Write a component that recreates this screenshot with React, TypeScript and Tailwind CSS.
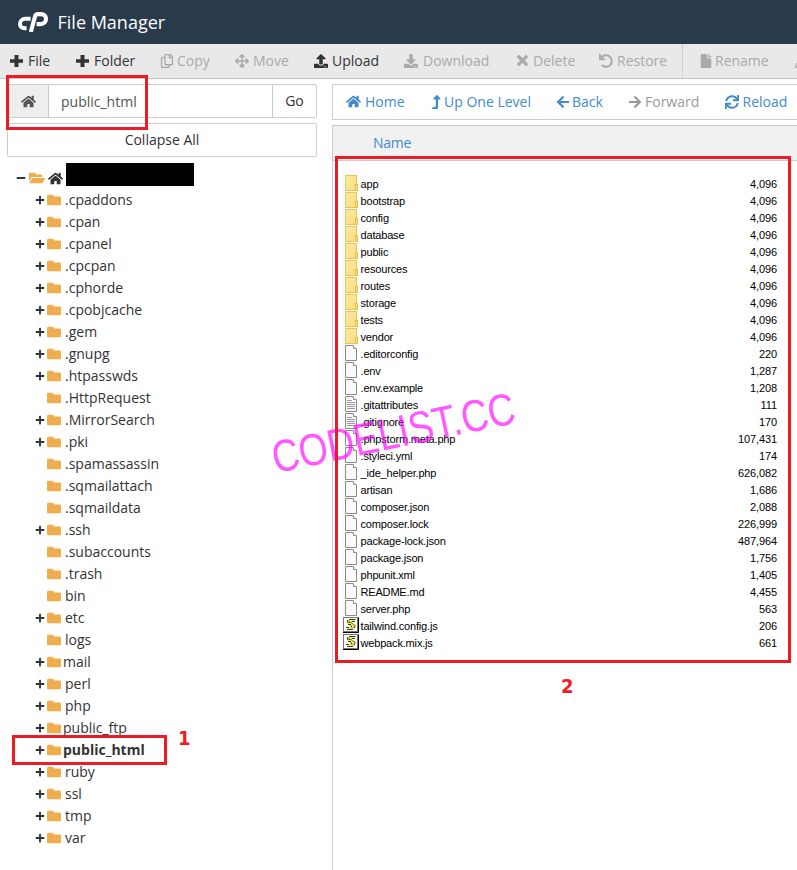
import type { ReactNode } from 'react';
import {
  FaPlus, FaMinus, FaRegCopy, FaArrowsAlt, FaUpload, FaDownload, FaTimes, FaUndo, FaFile, FaPencilAlt,
  FaHome, FaLevelUpAlt, FaArrowLeft, FaArrowRight, FaSync, FaFolder, FaFolderOpen,
} from 'react-icons/fa';

type Action = { label: string; icon: ReactNode; cls: string };

/* Heavy plus used by the creation actions */
const BoldPlus = () => (
  <svg width="15" height="14" viewBox="0 0 15 14" fill="#333">
    <path d="M5.5 1H9.5V5.2H14V8.8H9.5V13H5.5V8.8H1V5.2H5.5Z" />
  </svg>
);

const tools: Action[] = [
  { label: 'File', icon: <BoldPlus />, cls: 'w-[66px] gap-[4px] text-[#333]' },
  { label: 'Folder', icon: <BoldPlus />, cls: 'w-[85px] gap-[4px] text-[#333]' },
  { label: 'Copy', icon: <FaRegCopy size={14} />, cls: 'w-[75px] gap-[3px] text-[#aaa]' },
  { label: 'Move', icon: <FaArrowsAlt size={14} />, cls: 'w-[79px] gap-[4px] text-[#aaa]' },
  { label: 'Upload', icon: <FaUpload size={14} />, cls: 'w-[90px] gap-[4px] text-[#333]' },
  { label: 'Download', icon: <FaDownload size={14} />, cls: 'w-[111px] gap-[5px] text-[#aaa]' },
  {
    label: 'Delete',
    icon: <FaTimes size={15} stroke="#aaa" strokeWidth={26} />,
    cls: 'w-[84px] gap-[3px] text-[#aaa]',
  },
  { label: 'Restore', icon: <FaUndo size={14} />, cls: 'w-[84px] gap-[4px] text-[#aaa] border-r border-dotted border-[#bbb]' },
  { label: 'Rename', icon: <FaFile size={14} />, cls: 'ml-[16px] w-[96px] gap-[2px] text-[#aaa]' },
  { label: 'Edit', icon: <FaPencilAlt size={14} />, cls: 'w-[80px] gap-[3px] text-[#aaa]' },
];

const nav: Action[] = [
  { label: 'Home', icon: <FaHome size={15} />, cls: 'w-[83px] gap-[4px] text-[#428bca]' },
  { label: 'Up One Level', icon: <FaLevelUpAlt size={14} />, cls: 'w-[127px] gap-[1px] text-[#428bca]' },
  { label: 'Back', icon: <FaArrowLeft size={14} />, cls: 'w-[72px] gap-[2px] text-[#428bca]' },
  { label: 'Forward', icon: <FaArrowRight size={14} />, cls: 'w-[96.5px] gap-[3px] text-[#999]' },
  { label: 'Reload', icon: <FaSync size={14} />, cls: 'gap-[4px] text-[#428bca]' },
];

type Node = { name: string; leaf?: boolean };
const tree: Node[] = [
  { name: '.cpaddons' }, { name: '.cpan' }, { name: '.cpanel' }, { name: '.cpcpan' }, { name: '.cphorde' },
  { name: '.cpobjcache' }, { name: '.gem' }, { name: '.gnupg' }, { name: '.htpasswds' },
  { name: '.HttpRequest', leaf: true }, { name: '.MirrorSearch' }, { name: '.pki' },
  { name: '.spamassassin', leaf: true }, { name: '.sqmailattach', leaf: true }, { name: '.sqmaildata', leaf: true },
  { name: '.ssh' }, { name: '.subaccounts', leaf: true }, { name: '.trash', leaf: true }, { name: 'bin', leaf: true },
  { name: 'etc' }, { name: 'logs', leaf: true }, { name: 'mail' }, { name: 'perl' }, { name: 'php' },
  { name: 'public_ftp' }, { name: 'public_html' }, { name: 'ruby' }, { name: 'ssl' }, { name: 'tmp' }, { name: 'var' },
];
const special = ['mail', 'public_ftp', 'public_html'];

type Kind = 'dir' | 'file' | 'text' | 'script';
const files: [string, string, Kind][] = [
  ['app', '4,096', 'dir'], ['bootstrap', '4,096', 'dir'], ['config', '4,096', 'dir'], ['database', '4,096', 'dir'],
  ['public', '4,096', 'dir'], ['resources', '4,096', 'dir'], ['routes', '4,096', 'dir'], ['storage', '4,096', 'dir'],
  ['tests', '4,096', 'dir'], ['vendor', '4,096', 'dir'], ['.editorconfig', '220', 'file'], ['.env', '1,287', 'file'],
  ['.env.example', '1,208', 'file'], ['.gitattributes', '111', 'text'], ['.gitignore', '170', 'text'],
  ['.phpstorm.meta.php', '107,431', 'file'], ['.styleci.yml', '174', 'file'], ['_ide_helper.php', '626,082', 'file'],
  ['artisan', '1,686', 'file'], ['composer.json', '2,088', 'file'], ['composer.lock', '226,999', 'file'],
  ['package-lock.json', '487,964', 'file'], ['package.json', '1,756', 'file'], ['phpunit.xml', '1,405', 'file'],
  ['README.md', '4,455', 'file'], ['server.php', '563', 'file'], ['tailwind.config.js', '206', 'script'],
  ['webpack.mix.js', '661', 'script'],
];

function FileIcon({ kind }: { kind: Kind }) {
  if (kind === 'dir')
    return (
      <svg width="16" height="17" viewBox="0 0 16 17">
        <defs>
          <linearGradient id="dir" x1="0" y1="0" x2="1" y2="1">
            <stop offset="0" stopColor="#ffeba6" />
            <stop offset="1" stopColor="#fbdc7c" />
          </linearGradient>
        </defs>
        <rect x="2.5" y="0.5" width="11" height="15" fill="url(#dir)" stroke="#e9c653" />
        <rect x="12.5" y="9.5" width="2" height="6" fill="#fbe08a" stroke="#e3bf4c" />
      </svg>
    );
  if (kind === 'script')
    return (
      <svg width="16" height="17" viewBox="0 0 16 17">
        <rect x="0.5" y="0.5" width="14" height="14" fill="#fff" stroke="#777" />
        <path d="M0 15.5H15.5V0.5" fill="none" stroke="#000" />
        <path d="M6 3H12L9 5L12 9L10 12H4L7 9.5L4 6Z" fill="#f0ea50" />
        <path
          d="M6 2.5H12.5M12 4.5H9M5.5 3.5H4.5V5.5H5.5M7 4.5L9 6.5M5 7.5H8M10 6.5L12 8.5L11 11.5M8 8.5L9 10.5M3 10.5H6M4 12.5H10M6 5.5H7"
          fill="none"
          stroke="#222"
          strokeWidth="0.9"
        />
      </svg>
    );
  return (
    <svg width="16" height="17" viewBox="0 0 16 17">
      <path d="M2.5 0.5H10L13.5 4V15.5H2.5Z" fill="#fafbfb" stroke="#8b8b8b" />
      <path d="M10.5 0.5V3.5H13.5" fill="#fff" stroke="#8b8b8b" />
      {kind === 'text' && <path d="M4 4.5H9M4 6.5H12M4 8.5H12M4 10.5H12M4 12.5H12" stroke="#9a9a9a" />}
    </svg>
  );
}

/* Linked "c" and "P" shapes of the brand mark */
function CpanelMark() {
  return (
    <svg width="30" height="20" viewBox="0 0 30 20" fill="none" stroke="#fff">
      <path d="M12.6 6.8H7.2C4.2 6.8 2 9.2 2 11.9C2 14.6 4 16.2 6.4 16.2H8.6" strokeWidth="4" />
      <path d="M12.8 20L17 4.6Q17.6 2.1 20.2 2.1H23C26 2.1 28 4.4 28 6.8C28 9.9 25.7 12.1 22.8 12.1H18.6" strokeWidth="4.1" />
    </svg>
  );
}

export default function App() {
  return (
    <div className="relative flex h-[870px] w-[797px] flex-col overflow-hidden bg-white font-['Open_Sans',sans-serif] text-[14px] text-[#333]">
      <header className="flex h-[44px] shrink-0 items-center bg-[#293a4a] pl-[18px] text-white">
        <CpanelMark />
        <h1 className="ml-[9.5px] text-[18px] leading-[44px]">File Manager</h1>
      </header>
      <div className="flex h-[35px] shrink-0 items-stretch border-b border-[#c0c4c9] bg-[#e9e9e9] pl-[9px]">
        {tools.map((t) => (
          <button key={t.label} className={'flex shrink-0 items-center whitespace-nowrap pb-px ' + t.cls}>
            {t.icon}
            <span>{t.label}</span>
          </button>
        ))}
      </div>

      <div className="flex min-h-0 flex-1 pt-[5px]">
        <aside className="w-[332px] shrink-0 pl-[7px]">
          <div className="flex h-[34px] w-[310px] rounded-[2px] border border-[#ccc]">
            <div className="flex w-[41px] items-center justify-center border-r border-[#ccc] bg-[#eee] text-[#555]">
              <FaHome size={15} />
            </div>
            <div className="flex flex-1 items-center pl-[12px] pt-px text-[#555]">public_html</div>
            <button className="w-[44px] border-l border-[#ccc] pb-px">Go</button>
          </div>
          <button className="mt-[5px] block h-[34px] w-[310px] rounded-[2px] border border-[#ccc] pb-px">Collapse All</button>
          <div className="mt-[9px] flex h-[22px] items-center pl-[9px]">
            <FaMinus size={10} className="mt-[2px]" />
            <FaFolderOpen size={16} className="ml-[3px] mt-[2px] text-[#f0ad4e]" />
            <FaHome size={15} className="ml-[3px] mt-[2px]" />
            <div className="mb-[6px] ml-[3px] h-[23px] w-[128px] bg-black" />
          </div>
          <ul>
            {tree.map((n) => (
              <li key={n.name} className="flex h-[22px] items-center pl-[27.5px]">
                <span className="w-[12.5px] pt-[2px]">{!n.leaf && <FaPlus size={10} />}</span>
                <FaFolder size={14} className="mt-[2px] text-[#f0ad4e]" />
                <span
                  className={
                    (special.includes(n.name) ? 'ml-[2px]' : 'ml-[4px]') + (n.name === 'public_html' ? ' font-bold' : '')
                  }
                >
                  {n.name}
                </span>
              </li>
            ))}
          </ul>
        </aside>

        <main className="flex flex-1 flex-col">
          <nav className="flex h-[36px] shrink-0 items-center overflow-hidden border border-r-0 border-[#ccc] pb-[2px] pl-[13px]">
            {nav.map((t) => (
              <button key={t.label} className={'flex shrink-0 items-center whitespace-nowrap ' + t.cls}>
                <span className="pt-px">{t.icon}</span>
                <span>{t.label}</span>
              </button>
            ))}
          </nav>
          <section className="mt-[5px] flex-1 border-l border-t border-[#ccc]">
            <div className="flex h-[35px] items-center border-b border-[#ccc] bg-[#f1f1f1] pb-[2px] pl-[40px] tracking-[-0.3px] text-[#428bca]">
              Name
            </div>
            <ul className="pt-[14px] font-['Liberation_Sans',Arial,sans-serif] text-[11px] text-black">
              {files.map(([name, size, kind]) => (
                <li key={name} className="flex h-[17px] items-center pl-[10px] pr-[20px]">
                  <FileIcon kind={kind} />
                  <span className="ml-[1.5px] pt-px tracking-[-0.17px]">{name}</span>
                  <span className="ml-auto pt-px tracking-[-0.1px]">{size}</span>
                </li>
              ))}
            </ul>
          </section>
        </main>
      </div>

      <div className="absolute left-[277px] top-[435px] origin-bottom-left -rotate-[11.8deg] scale-x-[0.83] whitespace-nowrap font-['Liberation_Sans',Arial,sans-serif] text-[45px] leading-[45px] text-[#ff00ff] opacity-65">
        CODELIST.CC
      </div>
      <div className="absolute left-[6px] top-[75px] h-[55px] w-[142px] border-[3px] border-[#ed1c24]" />
      <div className="absolute left-[335px] top-[156px] h-[507px] w-[456px] border-[3px] border-[#ed1c24]" />
      <div className="absolute left-[12px] top-[735px] h-[30px] w-[155px] border-[3px] border-[#ed1c24]" />
      <span className="absolute left-[178px] top-[724px] font-['DejaVu_Sans_Condensed','DejaVu_Sans',sans-serif] text-[20px] font-bold leading-[28px] text-[#ed1c24]">1</span>
      <span className="absolute left-[561px] top-[672px] font-['DejaVu_Sans_Condensed','DejaVu_Sans',sans-serif] text-[20px] font-bold leading-[28px] text-[#ed1c24]">2</span>
    </div>
  );
}
